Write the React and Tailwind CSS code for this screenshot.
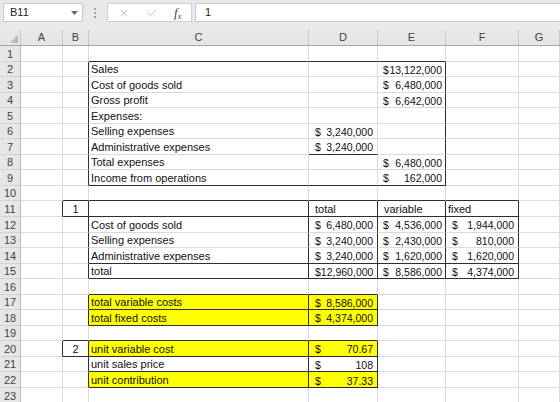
import { X, Check } from "lucide-react";

// column index: 0 = row header, 1 = A ... 7 = G
const hDark = new Set(); // bottom edge of cell "r:c"
const vDark = new Set(); // right edge of cell "r:c"

const outline = (r1, r2, c1, c2) => {
  for (let c = c1; c <= c2; c++) {
    hDark.add(`${r1 - 1}:${c}`);
    hDark.add(`${r2}:${c}`);
  }
  for (let r = r1; r <= r2; r++) {
    vDark.add(`${r}:${c1 - 1}`);
    vDark.add(`${r}:${c2}`);
  }
};

const allBorders = (r1, r2, c1, c2) => {
  for (let r = r1; r <= r2; r++) {
    for (let c = c1; c <= c2; c++) outline(r, r, c, c);
  }
};

// table 1
outline(2, 9, 3, 5);
hDark.add("7:4");
// table 2
outline(11, 11, 2, 2);
outline(11, 11, 3, 6);
outline(12, 14, 3, 6);
outline(15, 15, 3, 6);
for (let r = 11; r <= 15; r++) {
  vDark.add(`${r}:3`);
  vDark.add(`${r}:4`);
  vDark.add(`${r}:5`);
}
// table 3
allBorders(17, 18, 3, 4);
outline(20, 20, 2, 2);
allBorders(20, 22, 3, 4);

const m = (num) => ({ money: num });

const data = {
  2: { 3: "Sales", 5: m("13,122,000") },
  3: { 3: "Cost of goods sold", 5: m("6,480,000") },
  4: { 3: "Gross profit", 5: m("6,642,000") },
  5: { 3: "Expenses:" },
  6: { 3: "Selling expenses", 4: m("3,240,000") },
  7: { 3: "Administrative expenses", 4: m("3,240,000") },
  8: { 3: "Total expenses", 5: m("6,480,000") },
  9: { 3: "Income from operations", 5: m("162,000") },
  11: { 2: { center: "1" }, 4: { pad: "total" }, 5: { pad: "variable" }, 6: "fixed" },
  12: { 3: "Cost of goods sold", 4: m("6,480,000"), 5: m("4,536,000"), 6: m("1,944,000") },
  13: { 3: "Selling expenses", 4: m("3,240,000"), 5: m("2,430,000"), 6: m("810,000") },
  14: { 3: "Administrative expenses", 4: m("3,240,000"), 5: m("1,620,000"), 6: m("1,620,000") },
  15: { 3: "total", 4: m("12,960,000"), 5: m("8,586,000"), 6: m("4,374,000") },
  17: { 3: "total variable costs", 4: m("8,586,000") },
  18: { 3: "total fixed costs", 4: m("4,374,000") },
  20: { 2: { center: "2" }, 3: "unit variable cost", 4: m("70.67") },
  21: { 3: "unit sales price", 4: m("108") },
  22: { 3: "unit contribution", 4: m("37.33") },
};

const yellow = new Set(["17:3", "17:4", "18:3", "18:4", "20:3", "20:4", "22:3", "22:4"]);

const moneyPad = {
  4: "pl-[6px] pr-[4px]",
  5: "pl-[5px] pr-[3px]",
  6: "pl-[6px] pr-[4px]",
};

const ROWS = Array.from({ length: 23 }, (_, i) => i + 1);
const COLS = ["A", "B", "C", "D", "E", "F", "G"];
const gridCols = "grid grid-cols-[21px_42px_26px_220px_69px_68px_73px_41px]";

const CellContent = ({ cell, c }) => {
  if (!cell) return null;
  if (typeof cell === "string") return <span className="pl-[2px] whitespace-nowrap">{cell}</span>;
  if (cell.center) return <span className="w-full text-center">{cell.center}</span>;
  if (cell.pad) return <span className="pl-[6px] whitespace-nowrap">{cell.pad}</span>;
  return (
    <span className={`flex w-full justify-between text-[10.5px] ${moneyPad[c]}`}>
      <span>$</span>
      <span>{cell.money}</span>
    </span>
  );
};

const Row = ({ r }) => {
  const row = data[r] || {};
  return (
    <div className={`${gridCols} h-[15.55px]`}>
      <div className="flex items-end justify-center pb-px bg-[#e6e6e6] border-r border-b border-r-[#bcbcbc] border-b-[#d2d2d2] text-[#444]">
        {r}
      </div>
      {COLS.map((_, i) => {
        const c = i + 1;
        const key = `${r}:${c}`;
        return (
          <div
            key={c}
            className={`flex items-end pb-px overflow-visible border-r border-b ${
              vDark.has(key) ? "border-r-[#2f2f2f]" : "border-r-[#dadada]"
            } ${hDark.has(key) ? "border-b-[#2f2f2f]" : "border-b-[#dadada]"} ${
              yellow.has(key) ? "bg-[#ffff00]" : "bg-white"
            }`}
          >
            <CellContent cell={row[c]} c={c} />
          </div>
        );
      })}
    </div>
  );
};

const App = () => {
  return (
    <div className="w-[560px] h-[402px] overflow-hidden bg-white font-['Liberation_Sans',Arial,sans-serif] text-[11px] text-[#111] leading-none">
      {/* formula bar */}
      <div className="h-[30px] bg-[#e9e9e9] flex items-start pt-[3px] pl-[3px]">
        <div className="w-[80px] h-[19px] bg-white border border-[#c8c8c8] flex items-center justify-between pl-[6px] pr-[4px]">
          <span className="text-[#222]">B11</span>
          <svg width="7" height="4" viewBox="0 0 7 4">
            <path d="M0 0 L7 0 L3.5 4 Z" fill="#666" />
          </svg>
        </div>
        <div className="w-[24px] h-[19px] flex flex-col items-center justify-center gap-[2px]">
          <span className="w-[2px] h-[2px] bg-[#a0a0a0]" />
          <span className="w-[2px] h-[2px] bg-[#a0a0a0]" />
          <span className="w-[2px] h-[2px] bg-[#a0a0a0]" />
        </div>
        <div className="w-[85px] h-[19px] bg-white border border-[#d0d0d0] flex items-center pl-[10px] gap-[16px]">
          <X size={12} strokeWidth={1.4} color="#a8a8a8" />
          <Check size={12} strokeWidth={1.4} color="#a8a8a8" />
          <span className="font-['Liberation_Serif',serif] italic text-[13px] text-[#444]">
            f<span className="text-[8px] relative top-[2px]">x</span>
          </span>
        </div>
        <div className="flex-1 ml-[3px] h-[19px] bg-white border border-r-0 border-[#c8c8c8] flex items-center pl-[9px] text-[#222]">
          1
        </div>
      </div>

      {/* column headers */}
      <div className={`${gridCols} h-[16px] bg-[#e6e6e6] border-b border-[#a6a6a6]`}>
        <div className="relative border-r border-[#c4c4c4]">
          <svg className="absolute right-[2px] bottom-[2px]" width="8" height="8" viewBox="0 0 8 8">
            <path d="M8 0 L8 8 L0 8 Z" fill="#b8b8b8" />
          </svg>
        </div>
        {COLS.map((l) => (
          <div key={l} className="flex items-center justify-center border-r border-[#c8c8c8] text-[#444]">
            {l}
          </div>
        ))}
      </div>

      {ROWS.map((r) => (
        <Row key={r} r={r} />
      ))}
    </div>
  );
};

export default App;
